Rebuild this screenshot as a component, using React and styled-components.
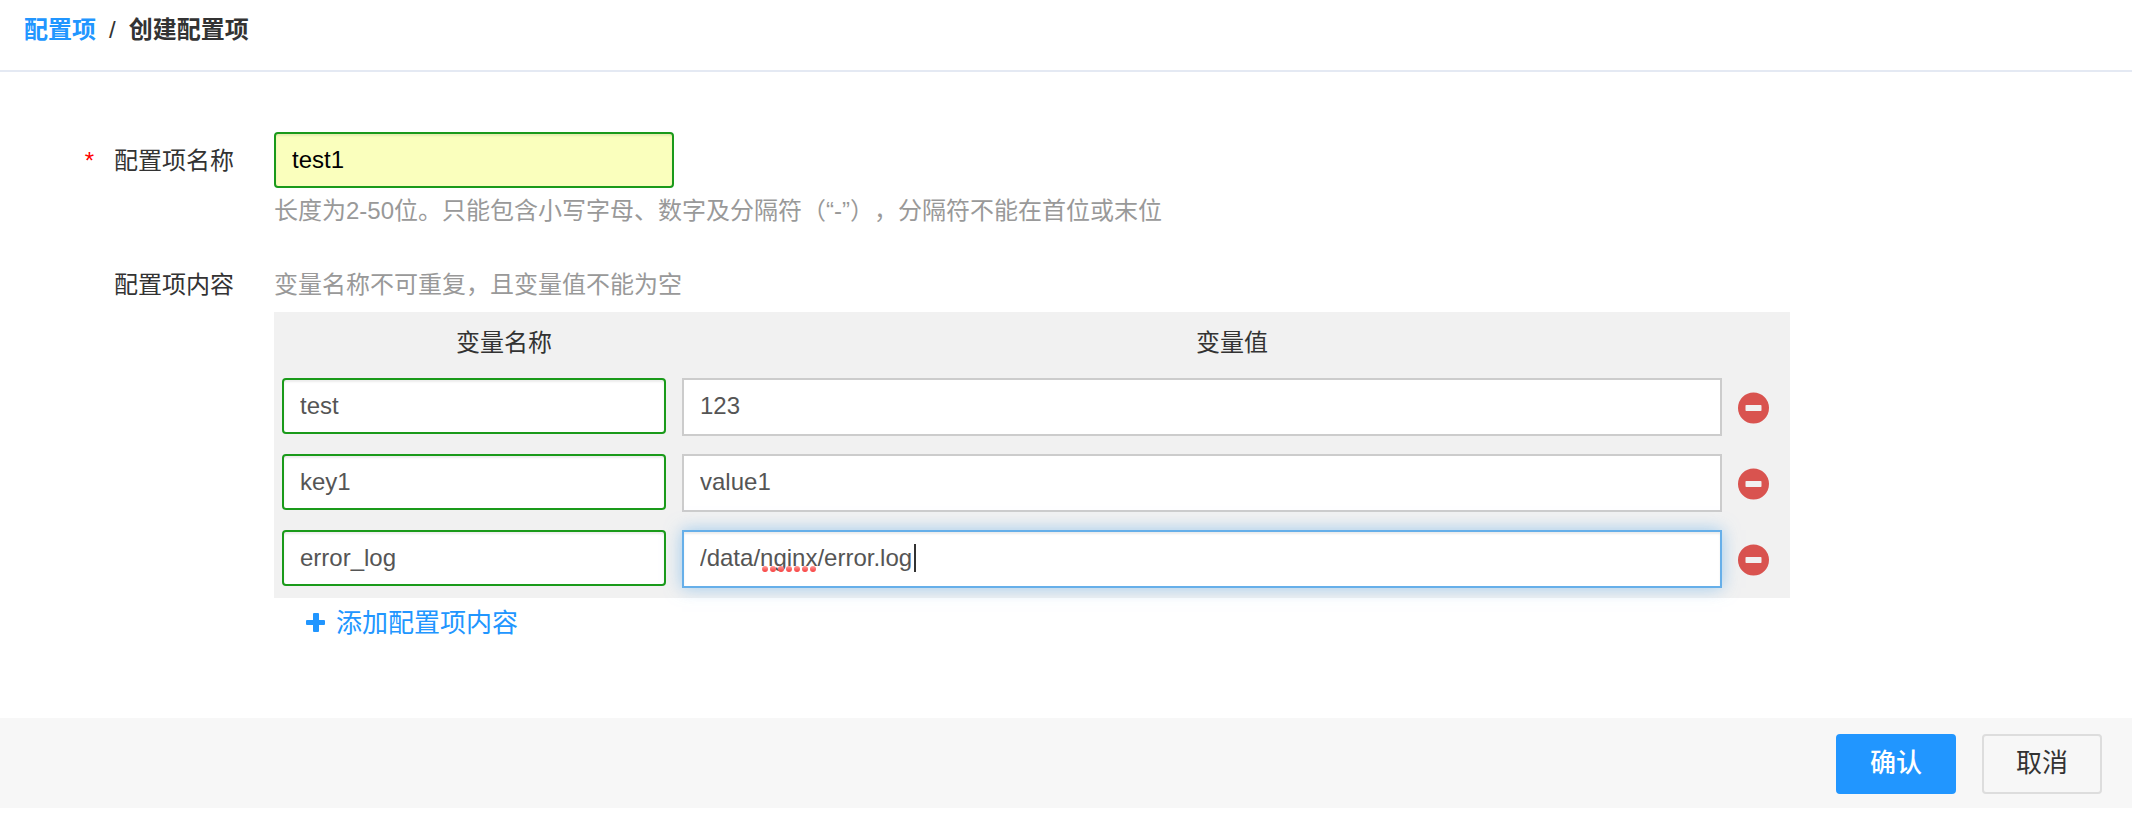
import React, { useState } from "react";
import styled, { createGlobalStyle, css } from "styled-components";

const GlobalStyle = createGlobalStyle`
  * {
    box-sizing: border-box;
  }

  body {
    margin: 0;
    background: #fff;
    color: #333;
    font-family: "Liberation Sans", "Noto Sans CJK SC", sans-serif;
    font-size: 24px;
    line-height: 34px;
    text-spacing-trim: space-all;
  }

  input,
  button {
    font: inherit;
  }
`;

const initialRows = [
  { id: 1, name: "test", value: "123" },
  { id: 2, name: "key1", value: "value1" },
  { id: 3, name: "error_log", value: "/data/nginx/error.log", editing: true },
];

const PlusIcon = () => (
  <svg width="20" height="20" viewBox="0 0 20 20" aria-hidden="true">
    <rect x="7" y="0" width="6" height="19" rx="1" fill="currentColor" />
    <rect x="0" y="7" width="19" height="5" rx="1" fill="currentColor" />
  </svg>
);

const MinusIcon = () => (
  <svg width="32" height="32" viewBox="0 0 32 32" aria-hidden="true">
    <circle cx="15.5" cy="16" r="15.5" fill="#d9534f" />
    <rect x="7.5" y="13" width="16" height="6" rx="0.8" fill="#f1f1f1" />
  </svg>
);

const SpellMark = () => (
  <Squiggle width="54" height="6" viewBox="0 0 54 6" aria-hidden="true">
    <defs>
      <linearGradient id="dot" x1="0" y1="0" x2="0" y2="1">
        <stop offset="0" stopColor="#ff9a96" />
        <stop offset="1" stopColor="#f73c3c" />
      </linearGradient>
    </defs>
    {[0, 1, 2, 3, 4, 5, 6].map((n) => (
      <circle key={n} cx={3 + n * 8} cy="3" r="3" fill="url(#dot)" />
    ))}
  </Squiggle>
);

const App = () => {
  const [name, setName] = useState("test1");
  const [rows, setRows] = useState(initialRows);

  const updateRow = (id, key, text) => {
    setRows(rows.map((row) => (row.id === id ? { ...row, [key]: text, editing: false } : row)));
  };

  const removeRow = (id) => {
    setRows(rows.filter((row) => row.id !== id));
  };

  const addRow = () => {
    setRows([...rows, { id: Date.now(), name: "", value: "" }]);
  };

  return (
    <>
      <GlobalStyle />
      <Header>
        <a href="#list">配置项</a>
        <span>/</span>
        <h1>创建配置项</h1>
      </Header>

      <Form>
        <FormRow>
          <Label htmlFor="config-name" $field>
            <Required>*</Required>
            配置项名称
          </Label>
          <Field>
            <NameInput
              id="config-name"
              value={name}
              onChange={(e) => setName(e.target.value)}
            />
            <Hint $below>
              长度为2-50位。只能包含小写字母、数字及分隔符（“-”），分隔符不能在首位或末位
            </Hint>
          </Field>
        </FormRow>

        <FormRow>
          <Label as="div" id="config-content">配置项内容</Label>
          <Field>
            <Hint>变量名称不可重复，且变量值不能为空</Hint>
            <Table aria-labelledby="config-content">
              <colgroup>
                <Col $width="400px" />
                <Col $width="auto" />
                <Col $width="60px" />
              </colgroup>
              <thead>
                <tr>
                  <NameHead>变量名称</NameHead>
                  <HeadCell colSpan="2">变量值</HeadCell>
                </tr>
              </thead>
              <tbody>
                {rows.map((row) => (
                  <tr key={row.id}>
                    <Cell>
                      <Input
                        $valid
                        aria-label="变量名称"
                        value={row.name}
                        onChange={(e) => updateRow(row.id, "name", e.target.value)}
                      />
                    </Cell>
                    <Cell>
                      <ValueBox>
                        <ValueInput
                          $active={row.editing}
                          aria-label="变量值"
                          value={row.value}
                          onChange={(e) => updateRow(row.id, "value", e.target.value)}
                        />
                        {row.editing && <SpellMark />}
                        {row.editing && <Caret />}
                      </ValueBox>
                    </Cell>
                    <ActionCell>
                      <RemoveButton
                        type="button"
                        aria-label="删除"
                        onClick={() => removeRow(row.id)}
                      >
                        <MinusIcon />
                      </RemoveButton>
                    </ActionCell>
                  </tr>
                ))}
              </tbody>
            </Table>
            <AddButton type="button" onClick={addRow}>
              <PlusIcon />
              添加配置项内容
            </AddButton>
          </Field>
        </FormRow>
      </Form>

      <Footer>
        <Button type="button" $primary>确认</Button>
        <Button type="button">取消</Button>
      </Footer>
    </>
  );
};

const Header = styled.header`
  display: flex;
  align-items: center;
  gap: 13px;
  padding: 13px 24px 23px;
  border-bottom: 2px solid #e4e9f3;

  a {
    color: #2196ff;
    font-weight: 700;
    text-decoration: none;
  }

  h1 {
    margin: 0;
    font-size: 24px;
    font-weight: 700;
  }
`;

const Form = styled.main`
  display: flex;
  flex-direction: column;
  gap: 40px;
  padding: 60px 0 78px;
`;

const FormRow = styled.div`
  display: flex;
  align-items: flex-start;
`;

const Label = styled.label`
  display: flex;
  flex: none;
  justify-content: flex-end;
  gap: 20px;
  width: 274px;
  padding-right: 40px;
  line-height: ${({ $field }) => ($field ? "58px" : "34px")};
`;

const Required = styled.span`
  color: #f00;
`;

const Field = styled.div`
  flex: 1;
  max-width: 1516px;
`;

const Hint = styled.p`
  margin: ${({ $below }) => ($below ? "6px 0 0" : "0 0 10px")};
  color: #999;
`;

const Input = styled.input`
  display: block;
  width: 100%;
  height: 56px;
  padding: 0 16px;
  border: 2px solid #ccc;
  background: #fff;
  color: #555;
  outline: none;

  ${({ $valid }) =>
    $valid &&
    css`
      border-color: #1a9a1a;
      border-radius: 4px;
      box-shadow: inset 0 2px 2px rgba(0, 0, 0, 0.08);
    `}
`;

const NameInput = styled(Input).attrs({ $valid: true })`
  max-width: 400px;
  background: #faffbd;
  color: #000;
`;

const ValueInput = styled(Input)`
  height: 58px;
  padding-bottom: 2px;

  ${({ $active }) =>
    $active &&
    css`
      border-color: #66afe9;
      box-shadow: inset 0 2px 2px rgba(0, 0, 0, 0.08),
        0 0 16px rgba(102, 175, 233, 0.6);
    `}
`;

const Table = styled.table`
  width: 100%;
  border-collapse: collapse;
  table-layout: fixed;
  background: #f1f1f1;
`;

const Col = styled.col`
  width: ${({ $width }) => $width};
`;

const HeadCell = styled.th`
  height: 58px;
  padding: 4px 0 0;
  font-weight: 400;
  text-align: center;
`;

const NameHead = styled(HeadCell)`
  padding-left: 60px;
`;

const Cell = styled.td`
  padding: 8px 8px 10px;
  vertical-align: top;
`;

const ActionCell = styled(Cell)`
  padding: 0 8px;
  vertical-align: middle;
`;

const ValueBox = styled.div`
  position: relative;
`;

const Squiggle = styled.svg`
  position: absolute;
  left: 80px;
  bottom: 16px;
`;

const Caret = styled.span`
  position: absolute;
  left: 232px;
  top: 14px;
  width: 2px;
  height: 28px;
  background: #333;
`;

const RemoveButton = styled.button`
  display: block;
  padding: 0;
  border: 0;
  background: none;
  cursor: pointer;

  svg {
    display: block;
  }
`;

const AddButton = styled.button`
  display: flex;
  align-items: center;
  gap: 10px;
  margin: 8px 0 0 32px;
  padding: 0;
  border: 0;
  background: none;
  color: #2196ff;
  font-size: 26px;
  cursor: pointer;
`;

const Footer = styled.footer`
  display: flex;
  justify-content: flex-end;
  gap: 26px;
  padding: 16px 30px 14px;
  background: #f7f7f7;
`;

const Button = styled.button`
  width: 120px;
  height: 60px;
  padding: 0 0 2px;
  border: 2px solid ${({ $primary }) => ($primary ? "#2196ff" : "#ddd")};
  border-radius: 4px;
  background: ${({ $primary }) => ($primary ? "#2196ff" : "#f7f7f7")};
  color: ${({ $primary }) => ($primary ? "#fff" : "#333")};
  font-size: 26px;
  font-weight: ${({ $primary }) => ($primary ? 500 : 400)};
  cursor: pointer;
`;

export default App;
